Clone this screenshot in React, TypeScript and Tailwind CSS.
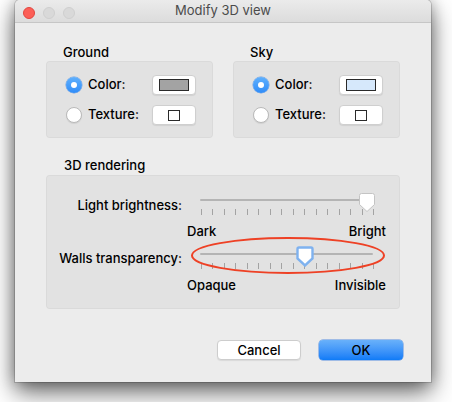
import React from "react";

const font = { fontFamily: "Inter, 'Liberation Sans', sans-serif" };

function Radio({ checked }: { checked?: boolean }) {
  return checked ? (
    <span className="flex h-4 w-4 items-center justify-center rounded-full bg-gradient-to-b from-[#5fb0fd] to-[#2f8cf8] shadow-[0_0_0_0.5px_rgba(30,110,220,0.6)]">
      <span className="h-[6px] w-[6px] rounded-full bg-white" />
    </span>
  ) : (
    <span className="h-4 w-4 rounded-full border border-[#b9b9b9] bg-white shadow-[0_1px_1px_rgba(0,0,0,0.08)]" />
  );
}

function SwatchButton({ children }: { children: React.ReactNode }) {
  return (
    <span className="ml-auto flex h-5 w-11 items-center justify-center rounded-[4px] border border-[#cfcfcf] bg-white shadow-[0_1px_1px_rgba(0,0,0,0.08)]">
      {children}
    </span>
  );
}

function ColorGroup({ title, color }: { title: string; color: string }) {
  return (
    <div className="w-[167px]">
      <div className="pl-[17px] text-[13px] leading-4 text-black">{title}</div>
      <div className="mt-px flex flex-col gap-[10px] rounded-[4px] bg-[#e2e2e2] pb-[13px] pl-5 pr-[17px] pt-[14px] shadow-[inset_0_0_0_1px_rgba(0,0,0,0.03)]">
        <div className="flex h-5 items-center">
          <Radio checked />
          <span className="ml-[6px] text-[13px] text-black">Color:</span>
          <SwatchButton>
            <span className="h-3 w-[30px] border border-[#2a2a2a]" style={{ background: color }} />
          </SwatchButton>
        </div>
        <div className="flex h-5 items-center">
          <Radio />
          <span className="ml-[6px] text-[13px] text-black">Texture:</span>
          <SwatchButton>
            <span className="h-[11px] w-3 border border-[#2a2a2a] bg-white" />
          </SwatchButton>
        </div>
      </div>
    </div>
  );
}

function Thumb({ focused }: { focused?: boolean }) {
  if (focused) {
    return (
      <svg width="18" height="21" viewBox="0 0 18 21" className="absolute top-[-1px]">
        <path d="M3 1.5 H15 Q16.5 1.5 16.5 3 V12.5 L9 19.5 L1.5 12.5 V3 Q1.5 1.5 3 1.5 Z" fill="#fff" stroke="#7fb2ef" strokeWidth="2.4" />
      </svg>
    );
  }
  return (
    <svg width="16" height="19" viewBox="0 0 16 19" className="absolute top-0">
      <path d="M2.5 0.5 H13.5 Q15.5 0.5 15.5 2.5 V11.5 L8 18.5 L0.5 11.5 V2.5 Q0.5 0.5 2.5 0.5 Z" fill="#fff" stroke="#c4c4c4" strokeWidth="1" />
    </svg>
  );
}

function Slider({ pos, focused, left, right }: { pos: number; focused?: boolean; left: string; right: string }) {
  const ticks = Array.from({ length: 16 }, (_, i) => 15 + i * 11.47);
  return (
    <div className="relative ml-1 h-[46px] w-[200px]">
      <div className="absolute left-[14px] right-[13px] top-[6px] h-[2px] rounded-full bg-[#b4b4b4]" />
      {ticks.map((x, i) => (
        <div key={i} className="absolute top-[16px] h-[6px] w-px bg-[#a3a3a3]" style={{ left: Math.round(x) }} />
      ))}
      <div className="absolute bottom-0 left-0 right-0 flex justify-between text-[13px] leading-4 text-black">
        <span className="pl-[1px]">{left}</span>
        <span>{right}</span>
      </div>
      <div className="absolute top-0" style={{ left: pos - (focused ? 9 : 8) }}>
        <Thumb focused={focused} />
      </div>
    </div>
  );
}

export default function App() {
  return (
    <div className="relative h-[402px] w-[452px] overflow-hidden bg-white font-medium" style={font}>
      <div className="ml-[15px] flex h-[382px] w-[416px] flex-col rounded-t-[5px] bg-[#ececec] shadow-[0_10px_24px_rgba(0,0,0,0.6),0_0_14px_rgba(0,0,0,0.25),0_0_0_1px_rgba(0,0,0,0.15)]">
        <div className="relative flex h-[23px] items-center justify-center rounded-t-[5px] border-b border-[#c6c6c6] bg-gradient-to-b from-[#ebebeb] to-[#dcdcdc]">
          <div className="absolute left-[8px] top-[7px] flex gap-2">
            <span className="h-3 w-3 rounded-full border border-[#e2463f] bg-[#fc5f57]" />
            <span className="h-3 w-3 rounded-full border border-[#cfcfcf] bg-[#d9d9d9]" />
            <span className="h-3 w-3 rounded-full border border-[#cfcfcf] bg-[#d9d9d9]" />
          </div>
          <span className="text-[13px] font-normal text-[#4b4b4b]">Modify 3D view</span>
        </div>

        <div className="mt-[21px] flex gap-5 px-[31px]">
          <ColorGroup title="Ground" color="#a3a3a3" />
          <ColorGroup title="Sky" color="#d6e8fb" />
        </div>

        <div className="mt-[19px] px-[31px]">
          <div className="pl-[18px] text-[13px] leading-4 text-black">3D rendering</div>
          <div className="mt-[2px] flex h-[134px] flex-col gap-2 rounded-[4px] bg-[#e2e2e2] pt-[18px] shadow-[inset_0_0_0_1px_rgba(0,0,0,0.03)]">
            <div className="flex">
              <div className="mt-1 w-[136px] text-right text-[13px] leading-4 text-black">Light brightness:</div>
              <Slider pos={181} left="Dark" right="Bright" />
            </div>
            <div className="flex">
              <div className="mt-[3px] w-[136px] text-right text-[13px] leading-4 text-black">Walls transparency:</div>
              <Slider pos={119} focused left="Opaque" right="Invisible" />
            </div>
          </div>
        </div>

        <div className="mt-[31px] flex justify-end gap-[18px] pr-[28px]">
          <button className="h-5 w-[84px] rounded-[4px] border border-[#cdcdcd] bg-white text-[13px] leading-4 text-black shadow-[0_1px_1px_rgba(0,0,0,0.08)]">
            Cancel
          </button>
          <button className="h-5 w-[84px] rounded-[4px] bg-gradient-to-b from-[#69b1fa] to-[#0d7bf7] text-[13px] leading-4 text-black shadow-[0_0_0_0.5px_rgba(20,100,220,0.7)]">
            OK
          </button>
        </div>
      </div>

      <svg width="452" height="402" className="pointer-events-none absolute left-0 top-0">
        <ellipse cx="288" cy="255.5" rx="96" ry="17.5" fill="none" stroke="#ee4125" strokeWidth="2" />
      </svg>
    </div>
  );
}
